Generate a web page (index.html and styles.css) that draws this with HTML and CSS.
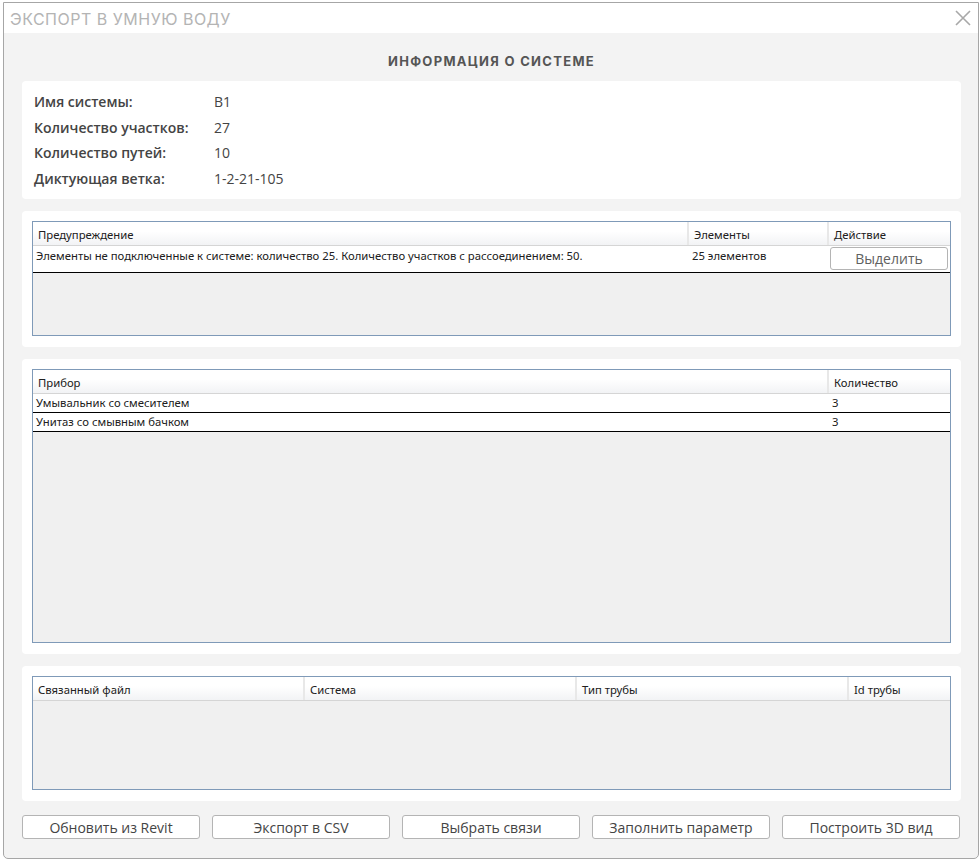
FILE: index.html
```html
<!DOCTYPE html>
<html>
<head>
<meta charset="utf-8">
<title>Экспорт в умную воду</title>
<link rel="stylesheet" href="styles.css">
</head>
<body>
<div class="window">
  <div class="titlebar">
    <span class="title">ЭКСПОРТ В УМНУЮ ВОДУ</span>
    <svg class="close" width="18" height="18" viewBox="0 0 18 18">
      <path d="M2 2 L16 16 M16 2 L2 16" stroke="#a8a8a8" stroke-width="1.6" fill="none"/>
    </svg>
  </div>

  <div class="content">
    <h3 class="heading">ИНФОРМАЦИЯ О СИСТЕМЕ</h3>

    <div class="card info">
      <div class="info-row"><span class="label">Имя системы:</span><span class="value">В1</span></div>
      <div class="info-row"><span class="label">Количество участков:</span><span class="value">27</span></div>
      <div class="info-row"><span class="label">Количество путей:</span><span class="value">10</span></div>
      <div class="info-row"><span class="label">Диктующая ветка:</span><span class="value">1-2-21-105</span></div>
    </div>

    <div class="card">
      <div class="grid warnings">
        <div class="grid-head">
          <div class="col c-warn">Предупреждение</div>
          <div class="col c-elem">Элементы</div>
          <div class="col c-act">Действие</div>
        </div>
        <div class="grid-row tall">
          <div class="col c-warn">Элементы не подключенные к системе: количество 25. Количество участков с рассоединением: 50.</div>
          <div class="col c-elem">25 элементов</div>
          <div class="col c-act"><button class="btn small">Выделить</button></div>
        </div>
      </div>
    </div>

    <div class="card">
      <div class="grid devices">
        <div class="grid-head">
          <div class="col c-dev">Прибор</div>
          <div class="col c-qty">Количество</div>
        </div>
        <div class="grid-row">
          <div class="col c-dev">Умывальник со смесителем</div>
          <div class="col c-qty">3</div>
        </div>
        <div class="grid-row">
          <div class="col c-dev">Унитаз со смывным бачком</div>
          <div class="col c-qty">3</div>
        </div>
      </div>
    </div>

    <div class="card">
      <div class="grid links">
        <div class="grid-head">
          <div class="col c-file">Связанный файл</div>
          <div class="col c-sys">Система</div>
          <div class="col c-type">Тип трубы</div>
          <div class="col c-id">Id трубы</div>
        </div>
      </div>
    </div>

    <div class="buttons">
      <button class="btn">Обновить из Revit</button>
      <button class="btn">Экспорт в CSV</button>
      <button class="btn">Выбрать связи</button>
      <button class="btn">Заполнить параметр</button>
      <button class="btn">Построить 3D вид</button>
    </div>
  </div>
</div>
</body>
</html>
```

FILE: styles.css
```css
body {
  margin: 0;
  background: #ffffff;
}
.window {
  position: relative;
  margin: 2px 2px 0 3px;
  width: 974px;
  height: 855px;
  border: 1px solid #a6a6a6;
  border-radius: 0 0 5px 5px;
  background: #f3f3f3;
  display: flex;
  flex-direction: column;
  overflow: hidden;
}
.titlebar {
  height: 30px;
  background: #ffffff;
  display: flex;
  align-items: center;
  justify-content: space-between;
  padding: 0 6px 0 6px;
}
.title {
  font-family: "Inter", "Liberation Sans", sans-serif;
  font-size: 16px;
  color: #b4b4b4;
  letter-spacing: 0.5px;
  margin-top: 1px;
}
.close {
  margin-top: -1px;
}
.content {
  flex: 1;
  padding: 0 17px 0 18px;
  display: flex;
  flex-direction: column;
}
.heading {
  margin: 20px 0 0 0;
  height: 28px;
  text-align: center;
  font-family: "Inter", "Liberation Sans", sans-serif;
  font-weight: 700;
  font-size: 13px;
  letter-spacing: 1.3px;
  color: #555555;
}
.card {
  background: #ffffff;
  border-radius: 4px;
  padding: 10px 10px 11px 10px;
  margin-bottom: 12px;
}
.card.info {
  padding: 8px 12px 18px 12px;
  height: 92px;
}
.info-row {
  height: 25.5px;
  display: flex;
  align-items: center;
  font-family: "Open Sans", "Noto Sans", sans-serif;
  font-size: 14px;
  color: #444444;
}
.label {
  width: 180px;
  font-weight: 600;
}
.value {
  font-weight: 400;
}

/* data grids */
.grid {
  border: 1px solid #7f9ab8;
  background: #f0f0f0;
  font-family: "Noto Sans", "Open Sans", sans-serif;
  font-size: 11.3px;
  color: #202020;
}
.warnings { height: 113px; }
.devices { height: 272px; }
.links { height: 112px; }
.grid-head {
  display: flex;
  height: 23px;
  background: linear-gradient(#ffffff 0%, #ffffff 40%, #f2f3f5 100%);
  border-bottom: 1px solid #d5d5d5;
}
.grid-head .col {
  border-right: 2px solid #e8e8e8;
  padding: 0 5px;
  line-height: 26px;
}
.grid-head .col:last-child {
  border-right: none;
}
.grid-row {
  display: flex;
  height: 18px;
  background: #ffffff;
  border-bottom: 1px solid #000000;
}
.grid-row .col {
  padding: 0 3px;
  line-height: 18px;
}
.grid-row.tall {
  height: 26px;
}
.grid-row.tall .col {
  line-height: 20px;
}
.col {
  white-space: nowrap;
  overflow: hidden;
  box-sizing: border-box;
}
.c-warn { width: 656px; }
.c-elem { width: 140px; }
.c-act { flex: 1; }
.grid-row .c-act { padding: 1px 1px 0 1px; }
.c-dev { width: 796px; }
.c-qty { flex: 1; }
.c-file { width: 272px; }
.c-sys { width: 272px; }
.c-type { width: 272px; }
.c-id { flex: 1; }

.btn {
  font-family: "Open Sans", "Noto Sans", sans-serif;
  font-size: 14px;
  color: #444444;
  background: #ffffff;
  border: 1px solid #b4b4b4;
  border-radius: 3px;
  height: 24px;
  padding: 0;
}
.btn.small {
  width: 118px;
  height: 23px;
  color: #606060;
}
.buttons {
  display: flex;
  gap: 12px;
  margin-top: 2px;
}
.buttons .btn {
  width: 178px;
}
```
